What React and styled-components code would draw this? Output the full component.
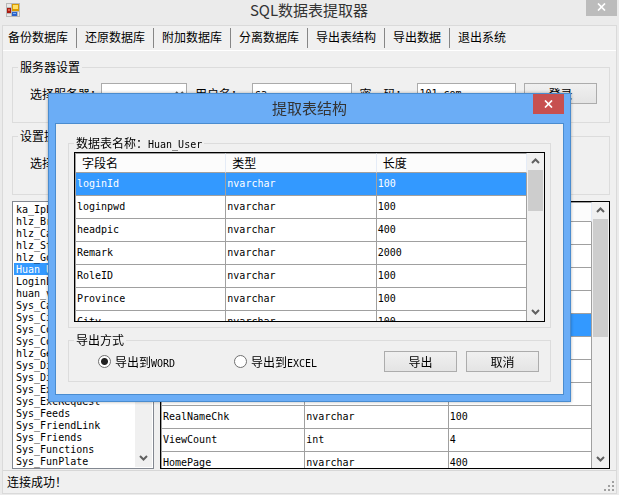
import React, { useState } from 'react';
import styled, { createGlobalStyle, css } from 'styled-components';

const GlobalStyle = createGlobalStyle`
  * {
    box-sizing: border-box;
  }

  body {
    margin: 0;
    color: #000;
    font-family: 'DejaVu Sans Mono', 'Noto Sans CJK SC', monospace;
    font-size: 10px;
  }

  button, input, select {
    font: inherit;
    color: inherit;
  }
`;

const cjkText = css`
  font-family: 'Noto Sans CJK SC', sans-serif;
  font-size: 12px;
  line-height: 16px;
`;

const Window = styled.div`
  display: flex;
  flex-direction: column;
  height: 100vh;
  overflow: hidden;
  background: #ebebeb;
`;

const TitleBar = styled.header`
  display: grid;
  grid-template-columns: 43px 1fr 48px;
  flex: none;
  height: 25px;
  padding: 0 2px 0 6px;
`;

const AppIcon = styled.svg`
  width: 14px;
  height: 14px;
  margin-top: 3px;
`;

const Title = styled.h1`
  margin: 0;
  color: #333;
  font-family: 'Noto Sans CJK SC', sans-serif;
  font-size: 15px;
  font-weight: 400;
  line-height: 20px;
  text-align: center;
`;

const CloseButton = styled.button`
  display: flex;
  align-items: center;
  justify-content: center;
  justify-self: end;
  width: 31px;
  height: ${({ $danger }) => ($danger ? '20px' : '16px')};
  padding: 0 0 ${({ $danger }) => ($danger ? '0' : '3px')};
  border: 0;
  background: ${({ $danger }) => ($danger ? '#c75050' : '#bcbcbc')};
`;

const Client = styled.div`
  display: flex;
  flex-direction: column;
  flex: 1;
  min-height: 0;
  margin: 0 2px 1px;
  border: 1px solid #dadada;
  background: #f0f0f0;
`;

const MenuBar = styled.nav`
  display: flex;
  flex: none;
  height: 25px;
  padding: 2px 0;
  border-bottom: 1px solid #fff;
`;

const MenuItem = styled.button`
  ${cjkText}
  flex: none;
  padding: 0 8px 2px 7px;
  border: 0;
  border-right: 1px solid #868686;
  margin-right: 1px;
  background: none;
  white-space: nowrap;

  &:first-child {
    padding-left: 5px;
  }

  &:last-child {
    border-right: 0;
  }
`;

const Content = styled.main`
  display: flex;
  flex-direction: column;
  flex: 1;
  min-height: 0;
  padding: 8px 6px 1px 9px;
`;

const Group = styled.fieldset`
  flex: none;
  min-width: 0;
  height: ${({ $height }) => $height}px;
  margin: 0 0 ${({ $gap }) => $gap || 0}px;
  padding: 0;
  border: 1px solid #dcdcdc;
`;

const Legend = styled.legend`
  ${cjkText}
  margin-left: 5px;
  padding: 0 2px;
`;

const FormRow = styled.div`
  display: flex;
  align-items: center;
  padding: 8px 12px 0 17px;
`;

const FieldLabel = styled.label`
  ${cjkText}
  flex: none;
  width: ${({ $width }) => $width}px;
  white-space: pre;
`;

const fieldBox = css`
  flex: 1;
  min-width: 0;
  height: 21px;
  margin-right: 8px;
  padding: 0 2px;
  border: 1px solid #ababab;
  border-radius: 0;
  background: #fff;
`;

const TextInput = styled.input`
  ${fieldBox}
`;

const SelectWrap = styled.div`
  display: flex;
  align-items: center;
  ${fieldBox}
  flex: 0 0 86px;

  select {
    flex: 1;
    min-width: 0;
    border: 0;
    background: none;
    appearance: none;
  }
`;

const PushButton = styled.button`
  ${cjkText}
  flex: none;
  width: 73px;
  height: 21px;
  padding: 0;
  border: 1px solid #acacac;
  background: linear-gradient(#f0f0f0, #e4e4e4);
`;

const Panels = styled.div`
  display: flex;
  flex: 1;
  gap: 6px;
  min-height: 0;
`;

const ListBox = styled.div`
  display: flex;
  flex: none;
  width: 142px;
  border: 1px solid #828790;
  padding: 1px;
  background: #fff;
  overflow: hidden;
`;

const ListItems = styled.ul`
  flex: 1;
  margin: 0;
  padding: 0;
  list-style: none;
`;

const ListItem = styled.li`
  height: 12px;
  padding-left: 2px;
  background: ${({ $selected }) => ($selected ? '#3399ff' : 'transparent')};
  color: ${({ $selected }) => ($selected ? '#fff' : '#000')};
  line-height: 13px;
`;

const GridFrame = styled.div`
  display: flex;
  flex: 1;
  min-width: 0;
  height: ${({ $height }) => ($height ? `${$height}px` : 'auto')};
  border: 1px solid #000;
  background: #fff;
  overflow: hidden;
`;

const GridTable = styled.table`
  flex: 1;
  width: 0;
  height: max-content;
  border-collapse: separate;
  border-spacing: 0;
  border-left: 1px solid #a0a0a0;
  table-layout: fixed;

  th {
    ${cjkText}
    height: 20px;
    padding: 0 6px;
    border-top: 1px solid #a0a0a0;
    border-right: 1px solid #e5ecf7;
    border-bottom: 1px solid #a0a0a0;
    background: #fcfcfc;
    font-weight: 400;
    text-align: left;
  }

  td {
    height: 23px;
    padding: 0 1px;
    border-right: 1px solid #a0a0a0;
    border-bottom: 1px solid #a0a0a0;
    line-height: 12px;
  }
`;

const Row = styled.tr`
  background: ${({ $selected }) => ($selected ? '#3399ff' : '#fff')};
  color: ${({ $selected }) => ($selected ? '#fff' : '#000')};
`;

const Track = styled.div`
  display: flex;
  flex-direction: column;
  align-items: center;
  flex: none;
  width: 17px;
  padding: 0 1px;
  background: #f0f0f0;

  svg {
    flex: none;
    margin: 5px 0 6px;
  }
`;

const Thumb = styled.div`
  width: 100%;
  height: ${({ $height }) => $height}px;
  margin-bottom: auto;
  background: #cdcdcd;
`;

const StatusBar = styled.footer`
  ${cjkText}
  display: flex;
  align-items: center;
  justify-content: space-between;
  flex: none;
  height: 23px;
  padding: 0 2px 0 4px;
  border-top: 1px solid #d7d7d7;

  svg {
    align-self: flex-end;
    margin-bottom: 2px;
  }
`;

const Overlay = styled.div`
  position: fixed;
  inset: 0;
  display: flex;
  align-items: center;
  justify-content: center;
`;

const Dialog = styled.section`
  width: 90%;
  max-width: 523px;
  padding: 0 6px 6px;
  border: 1px solid #4a8ccf;
  background: #6badf6;
  box-shadow: 0 0 3px rgba(0, 0, 0, 0.3);
`;

const DialogHeader = styled.header`
  display: grid;
  grid-template-columns: 31px 1fr 31px;
  height: 29px;
`;

const DialogTitle = styled(Title)`
  grid-column: 2;
  line-height: 28px;
`;

const DialogBody = styled.div`
  padding: 11px 12px 12px;
  border: 1px solid #4a8ccf;
  background: #f0f0f0;
`;

const Mono = styled.span`
  font-family: 'DejaVu Sans Mono', monospace;
  font-size: 10px;
  line-height: 1;
`;

const GridArea = styled.div`
  padding: 1px 5px 0;
`;

const ExportRow = styled.div`
  display: flex;
  align-items: center;
  gap: 9px;
  padding: 3px 11px 0 29px;
`;

const RadioLabel = styled.label`
  ${cjkText}
  display: flex;
  align-items: center;
  flex: 0 1 127px;
  gap: 4px;
  white-space: nowrap;
`;

const Radio = styled.input`
  flex: none;
  width: 13px;
  height: 13px;
  margin: 0;
  border: 1px solid #707070;
  border-radius: 50%;
  background: #fff;
  appearance: none;

  &:checked {
    background: radial-gradient(circle, #212121 0 3px, #fff 4px);
  }
`;

const DialogButtons = styled.div`
  display: flex;
  gap: 9px;
  margin-left: auto;
`;

const menuItems = ['备份数据库', '还原数据库', '附加数据库', '分离数据库', '导出表结构', '导出数据', '退出系统'];

const tables = [
  'ka_IpLog', 'hlz_Brand', 'hlz_Cases', 'hlz_Store', 'hlz_Goods', 'Huan_User',
  'LoginLog', 'huan_view', 'Sys_Cases', 'Sys_Circle', 'Sys_Comment', 'Sys_Config',
  'hlz_Genre', 'Sys_Diary', 'Sys_Dict', 'Sys_Exam', 'Sys_ExcRequest', 'Sys_Feeds',
  'Sys_FriendLink', 'Sys_Friends', 'Sys_Functions', 'Sys_FunPlate',
];

const userFields = [
  ['loginId', 'nvarchar', '100'],
  ['loginpwd', 'nvarchar', '100'],
  ['headpic', 'nvarchar', '400'],
  ['Remark', 'nvarchar', '2000'],
  ['RoleID', 'nvarchar', '100'],
  ['Province', 'nvarchar', '100'],
  ['City', 'nvarchar', '100'],
];

const allFields = [
  ...userFields,
  ['RealName', 'nvarchar', '100'],
  ['RealNameChk', 'nvarchar', '100'],
  ['ViewCount', 'int', '4'],
  ['HomePage', 'nvarchar', '400'],
];

const Chevron = ({ up }) => (
  <svg width="9" height="6" viewBox="0 0 9 6" fill="none" stroke="#606060" strokeWidth="2">
    <path d={up ? 'M1 5 4.5 1.5 8 5' : 'M1 1 4.5 4.5 8 1'} />
  </svg>
);

const Cross = () => (
  <svg width="9" height="8" viewBox="0 0 9 8" stroke="#fff" strokeWidth="1.7">
    <path d="M1 .5 8 7.5M8 .5 1 7.5" />
  </svg>
);

const Scrollbar = ({ thumb }) => (
  <Track>
    <Chevron up />
    <Thumb $height={thumb} />
    <Chevron />
  </Track>
);

const FieldGrid = ({ rows, selected, thumb, height }) => (
  <GridFrame $height={height}>
    <GridTable>
      <thead>
        <tr>
          <th>字段名</th>
          <th>类型</th>
          <th>长度</th>
        </tr>
      </thead>
      <tbody>
        {rows.map((row, i) => (
          <Row key={row[0]} $selected={i === selected}>
            {row.map((cell, j) => <td key={j}>{cell}</td>)}
          </Row>
        ))}
      </tbody>
    </GridTable>
    <Scrollbar thumb={thumb} />
  </GridFrame>
);

const ExportDialog = () => {
  const [format, setFormat] = useState('WORD');

  return (
    <Overlay>
      <Dialog role="dialog" aria-labelledby="dialog-title">
        <DialogHeader>
          <DialogTitle as="h2" id="dialog-title">提取表结构</DialogTitle>
          <CloseButton $danger aria-label="关闭"><Cross /></CloseButton>
        </DialogHeader>
        <DialogBody>
          <Group $height={193} $gap={4}>
            <Legend>数据表名称：<Mono>Huan_User</Mono></Legend>
            <GridArea>
              <FieldGrid rows={userFields} selected={0} thumb={41} height={170} />
            </GridArea>
          </Group>
          <Group $height={50}>
            <Legend>导出方式</Legend>
            <ExportRow>
              {['WORD', 'EXCEL'].map((name) => (
                <RadioLabel key={name}>
                  <Radio
                    type="radio"
                    name="format"
                    checked={format === name}
                    onChange={() => setFormat(name)}
                  />
                  <span>导出到<Mono>{name}</Mono></span>
                </RadioLabel>
              ))}
              <DialogButtons>
                <PushButton>导出</PushButton>
                <PushButton>取消</PushButton>
              </DialogButtons>
            </ExportRow>
          </Group>
        </DialogBody>
      </Dialog>
    </Overlay>
  );
};

const App = () => (
  <>
    <GlobalStyle />
    <Window>
      <TitleBar>
        <AppIcon viewBox="0 0 14 14">
          <path fill="#b8b8b8" d="M0 0h14v14H0z" />
          <path fill="#e8e8e8" d="M1 1h4v3H1zM1 11h4v2H1z" />
          <path fill="#a8190f" d="M1 5h4v5H1z" />
          <path fill="#e0604c" d="M2 6h2v2H2z" />
          <path fill="#d99a00" d="M6 1h7v7H6z" />
          <path fill="#ffe066" d="M7 2h5v4H7z" />
          <path fill="#2b62c9" d="M6 9h5v4H6z" />
          <path fill="#7db1f5" d="M7 10h3v1H7z" />
          <path fill="#e8e8e8" d="M12 9h1v4h-1z" />
        </AppIcon>
        <Title>SQL数据表提取器</Title>
        <CloseButton aria-label="关闭"><Cross /></CloseButton>
      </TitleBar>
      <Client>
        <MenuBar>
          {menuItems.map((item) => <MenuItem key={item}>{item}</MenuItem>)}
        </MenuBar>
        <Content>
          <Group $height={64} $gap={5}>
            <Legend>服务器设置</Legend>
            <FormRow>
              <FieldLabel $width={71} htmlFor="server">选择服务器：</FieldLabel>
              <SelectWrap>
                <select id="server" />
                <Chevron />
              </SelectWrap>
              <FieldLabel $width={57} htmlFor="user">用户名：</FieldLabel>
              <TextInput id="user" defaultValue="sa" />
              <FieldLabel $width={57} htmlFor="password">密　码：</FieldLabel>
              <TextInput id="password" defaultValue="101.com" />
              <PushButton>登录</PushButton>
            </FormRow>
          </Group>
          <Group $height={67} $gap={6}>
            <Legend>设置提取</Legend>
            <FormRow>
              <FieldLabel $width={71} htmlFor="database">选择数据库：</FieldLabel>
              <SelectWrap>
                <select id="database" />
                <Chevron />
              </SelectWrap>
            </FormRow>
          </Group>
          <Panels>
            <ListBox>
              <ListItems role="listbox" aria-label="数据表">
                {tables.map((name) => (
                  <ListItem
                    key={name}
                    role="option"
                    aria-selected={name === 'Huan_User'}
                    $selected={name === 'Huan_User'}
                  >
                    {name}
                  </ListItem>
                ))}
              </ListItems>
              <Scrollbar thumb={60} />
            </ListBox>
            <FieldGrid rows={allFields} selected={4} thumb={118} />
          </Panels>
        </Content>
        <StatusBar>
          <span>连接成功！</span>
          <svg width="10" height="10" viewBox="0 0 10 10" fill="#a0a0a0">
            <path d="M8 0h2v2H8zM4 4h2v2H4zM8 4h2v2H8zM0 8h2v2H0zM4 8h2v2H4zM8 8h2v2H8z" />
          </svg>
        </StatusBar>
      </Client>
    </Window>
    <ExportDialog />
  </>
);

export default App;
